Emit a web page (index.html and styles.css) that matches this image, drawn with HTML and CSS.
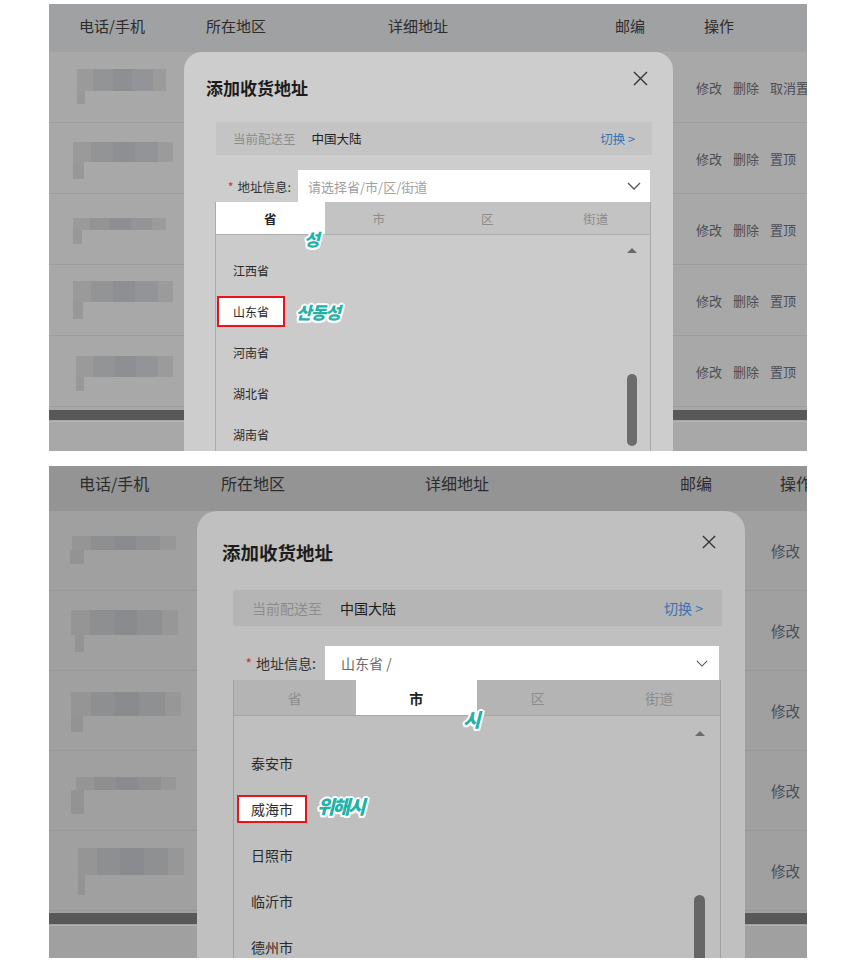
FILE: index.html
```html
<!DOCTYPE html>
<html lang="zh-CN">
<head>
<meta charset="utf-8">
<title>添加收货地址</title>
<link rel="stylesheet" href="styles.css">
</head>
<body>
<section class="panel p1">
  <div class="thead"><span>电话/手机</span><span>所在地区</span><span>详细地址</span><span>邮编</span><span>操作</span></div>
  <div class="row r1"><div class="blob"><i class="bar"></i><i class="stub"></i></div><div class="ops"><span>修改</span><span>删除</span><span>取消置顶</span></div></div>
  <div class="row r2"><div class="blob"><i class="bar"></i><i class="stub"></i></div><div class="ops"><span>修改</span><span>删除</span><span>置顶</span></div></div>
  <div class="row r3"><div class="blob"><i class="bar"></i><i class="stub"></i></div><div class="ops"><span>修改</span><span>删除</span><span>置顶</span></div></div>
  <div class="row r4"><div class="blob"><i class="bar"></i><i class="stub"></i></div><div class="ops"><span>修改</span><span>删除</span><span>置顶</span></div></div>
  <div class="row r5"><div class="blob"><i class="bar"></i><i class="stub"></i></div><div class="ops"><span>修改</span><span>删除</span><span>置顶</span></div></div>
  <div class="tfoot"><div class="dark"></div><div class="line"></div></div>

  <div class="modal">
    <div class="m-head">
      <h2 class="m-title">添加收货地址</h2>
      <svg class="m-close" viewBox="0 0 15 15"><path d="M1 1L14 14M14 1L1 14" stroke="#333" stroke-width="1.4" fill="none"/></svg>
    </div>
    <div class="m-body">
      <div class="ship"><span class="ship-label">当前配送至</span><span class="ship-val">中国大陆</span><span class="ship-switch">切换 &gt;</span></div>
      <div class="field">
        <label class="f-label"><em>*</em>地址信息:</label>
        <div class="f-input"><span>请选择省/市/区/街道</span><svg class="chev" viewBox="0 0 14 8"><path d="M1 1L7 7L13 1" stroke="#555" stroke-width="1.3" fill="none"/></svg></div>
      </div>
      <div class="picker">
        <div class="tabs"><span class="tab on">省</span><span class="tab">市</span><span class="tab">区</span><span class="tab">街道</span></div>
        <div class="list">
          <ul class="items">
            <li><span>江西省</span></li>
            <li class="sel"><span>山东省</span></li>
            <li><span>河南省</span></li>
            <li><span>湖北省</span></li>
            <li><span>湖南省</span></li>
          </ul>
          <div class="sbar"><i class="arrow"></i><i class="thumb"></i></div>
        </div>
      </div>
    </div>
    <span class="anno a-tab">성</span>
    <span class="anno a-item">산동성</span>
  </div>
</section>

<section class="panel p2">
  <div class="thead"><span>电话/手机</span><span>所在地区</span><span>详细地址</span><span>邮编</span><span>操作</span></div>
  <div class="row r1"><div class="blob"><i class="bar"></i><i class="stub"></i></div><div class="ops"><span>修改</span></div></div>
  <div class="row r2"><div class="blob"><i class="bar"></i><i class="stub"></i></div><div class="ops"><span>修改</span></div></div>
  <div class="row r3"><div class="blob"><i class="bar"></i><i class="stub"></i></div><div class="ops"><span>修改</span></div></div>
  <div class="row r4"><div class="blob"><i class="bar"></i><i class="stub"></i></div><div class="ops"><span>修改</span></div></div>
  <div class="row r5"><div class="blob"><i class="bar"></i><i class="stub"></i></div><div class="ops"><span>修改</span></div></div>
  <div class="tfoot"><div class="dark"></div><div class="line"></div></div>

  <div class="modal">
    <div class="m-head">
      <h2 class="m-title">添加收货地址</h2>
      <svg class="m-close" viewBox="0 0 15 15"><path d="M1 1L14 14M14 1L1 14" stroke="#333" stroke-width="1.4" fill="none"/></svg>
    </div>
    <div class="m-body">
      <div class="ship"><span class="ship-label">当前配送至</span><span class="ship-val">中国大陆</span><span class="ship-switch">切换 &gt;</span></div>
      <div class="field">
        <label class="f-label"><em>*</em>地址信息:</label>
        <div class="f-input"><span>山东省 /</span><svg class="chev" viewBox="0 0 14 8"><path d="M1 1L7 7L13 1" stroke="#555" stroke-width="1.3" fill="none"/></svg></div>
      </div>
      <div class="picker">
        <div class="tabs"><span class="tab">省</span><span class="tab on">市</span><span class="tab">区</span><span class="tab">街道</span></div>
        <div class="list">
          <ul class="items">
            <li><span>泰安市</span></li>
            <li class="sel"><span>威海市</span></li>
            <li><span>日照市</span></li>
            <li><span>临沂市</span></li>
            <li><span>德州市</span></li>
          </ul>
          <div class="sbar"><i class="arrow"></i><i class="thumb"></i></div>
        </div>
      </div>
    </div>
    <span class="anno a-tab">시</span>
    <span class="anno a-item">위해시</span>
  </div>
</section>
</body>
</html>
```

FILE: styles.css
```css
* { box-sizing: border-box; margin: 0; padding: 0; }
body { background: #fff; font-family: "Noto Sans CJK SC", "Noto Sans", sans-serif; color: #2b2b2b; }

.panel { position: relative; overflow: hidden; margin-left: 49px; width: 758px; background: #a8a8a8; }
.p1 { margin-top: 4px; height: 447px; }
.p2 { margin-top: 15px; height: 492px; background: #a0a0a0; }

.thead { display: grid; align-items: center; padding-left: 30px; color: #2c2c2c; white-space: nowrap; }
.p1 .thead { height: 48px; padding-bottom: 5px; background: #a0a1a2; font-size: 15px; grid-template-columns: 127px 182px 227px 89px 1fr; }
.p2 .thead { height: 45px; padding-bottom: 12px; background: #949494; font-size: 16px; grid-template-columns: 142px 204px 255px 100px 1fr; }

.row { display: flex; border-bottom: 1px solid #9d9d9d; }
.p1 .row { height: 71px; }
.p2 .row { height: 80px; border-bottom-color: #979797; }

.blob { flex: 0 0 647px; }
.p2 .blob { flex-basis: 722px; }
.blob i { display: block; }
.bar { background: linear-gradient(90deg, #9a9a9b 0 18%, #939496 18% 40%, #8e8f93 40% 62%, #939497 62% 85%, #9b9b9c 85%); filter: blur(0.6px); }
.stub { background: #98989a; filter: blur(0.6px); }
.p2 .bar { background: linear-gradient(90deg, #959596 0 18%, #8e8f91 18% 40%, #8a8b8e 40% 62%, #8f9092 62% 85%, #979798 85%); }
.p2 .stub { background: #939394; }

.p1 .r1 .bar { margin: 17px 0 0 28px; width: 89px; height: 22px; }
.p1 .r1 .stub { margin-left: 28px; width: 8px; height: 13px; }
.p1 .r2 .bar { margin: 19px 0 0 24px; width: 100px; height: 20px; }
.p1 .r2 .stub { margin-left: 24px; width: 11px; height: 17px; }
.p1 .r3 .bar { margin: 24px 0 0 24px; width: 93px; height: 12px; }
.p1 .r3 .stub { margin-left: 24px; width: 9px; height: 14px; }
.p1 .r4 .bar { margin: 16px 0 0 24px; width: 100px; height: 21px; }
.p1 .r4 .stub { margin-left: 24px; width: 10px; height: 17px; }
.p1 .r5 .bar { margin: 20px 0 0 27px; width: 97px; height: 21px; }
.p1 .r5 .stub { margin-left: 27px; width: 8px; height: 14px; }

.p2 .r1 .bar { margin: 25px 0 0 23px; width: 104px; height: 14px; }
.p2 .r1 .stub { margin-left: 21px; width: 14px; height: 14px; }
.p2 .r2 .bar { margin: 19px 0 0 22px; width: 107px; height: 25px; }
.p2 .r2 .stub { margin-left: 26px; width: 9px; height: 17px; }
.p2 .r3 .bar { margin: 21px 0 0 22px; width: 110px; height: 24px; }
.p2 .r3 .stub { margin-left: 22px; width: 12px; height: 16px; }
.p2 .r4 .bar { margin: 26px 0 0 27px; width: 100px; height: 13px; }
.p2 .r4 .stub { margin-left: 22px; width: 13px; height: 24px; }
.p2 .r5 .bar { margin: 17px 0 0 29px; width: 106px; height: 27px; }
.p2 .r5 .stub { margin-left: 29px; width: 7px; height: 20px; }

.ops { display: flex; align-items: center; white-space: nowrap; color: #4a4e56; }
.p1 .ops { font-size: 13px; gap: 11px; }
.p2 .ops { font-size: 14.5px; gap: 12px; }

.tfoot .dark { background: #585858; }
.tfoot .line { height: 1px; margin-top: 1px; background: #b2b2b2; }
.p1 .tfoot { padding-top: 3px; }
.p1 .tfoot .dark { height: 10px; }
.p2 .tfoot { padding-top: 2px; }
.p2 .tfoot .dark { height: 11px; }

/* modal */
.modal { position: absolute; background: #cdcdcd; }
.p1 .modal { left: 135px; top: 48px; width: 489px; height: 420px; border-radius: 18px 18px 0 0; }
.p2 .modal { left: 148px; top: 45px; width: 548px; height: 460px; border-radius: 20px 20px 0 0; background: #c0c0c0; }

.m-head { display: flex; justify-content: space-between; align-items: flex-start; }
.m-title { font-weight: 700; color: #1c1c1c; white-space: nowrap; }
.p1 .m-head { height: 70px; padding: 0 25px 0 22px; }
.p1 .m-title { font-size: 17px; line-height: 24px; margin-top: 24px; }
.p1 .m-close { width: 15px; height: 15px; margin-top: 19px; }
.p2 .m-head { height: 79px; padding: 0 29px 0 25px; }
.p2 .m-title { font-size: 18.5px; line-height: 26px; margin-top: 28px; }
.p2 .m-close { width: 14px; height: 14px; margin-top: 24px; }

.p1 .m-body { padding: 0 21px 0 32px; }
.p2 .m-body { padding: 0 23px 0 36px; }

.ship { display: flex; align-items: center; white-space: nowrap; }
.p1 .ship { height: 33px; padding: 0 17px; font-size: 12.5px; background: #c4c4c4; }
.p2 .ship { height: 36px; padding: 0 19px; font-size: 14px; background: #b5b5b5; }
.ship-label { color: #8c8c8c; }
.ship-val { color: #202020; }
.p1 .ship-val { margin-left: 16px; }
.p2 .ship-val { margin-left: 18px; }
.ship-switch { margin-left: auto; color: #3a72b2; }

.field { display: flex; }
.p1 .field { margin-top: 15px; height: 32px; }
.p2 .field { margin-top: 20px; height: 34px; }
.f-label { display: flex; align-items: center; justify-content: flex-end; white-space: nowrap; color: #333; }
.p1 .f-label { width: 82px; padding-right: 7px; font-size: 12.5px; }
.p2 .f-label { width: 92px; padding-right: 9px; font-size: 14px; }
.f-label em { color: #c9372c; font-style: normal; margin-right: 4px; }
.f-input { flex: 1; background: #fff; display: flex; align-items: center; justify-content: space-between; white-space: nowrap; }
.p1 .f-input { padding: 0 9px 0 10px; margin-right: 2px; font-size: 13px; color: #a0a0a0; }
.p2 .f-input { padding: 0 11px 0 16px; margin-right: 3px; font-size: 14px; color: #6a6a6a; }
.p1 .chev { width: 14px; height: 8px; }
.p2 .chev { width: 12px; height: 7px; }

.picker { border-left: 1px solid #a9a9a9; border-right: 1px solid #a9a9a9; }
.p1 .picker { margin: 0 1px 0 -1px; }
.p2 .picker { margin-right: 1px; border-color: #a0a0a0; }

.tabs { display: grid; grid-template-columns: repeat(4, 1fr); border-bottom: 1px solid #adadad; }
.p1 .tabs { height: 33px; font-size: 12.5px; background: #c3c3c3; }
.p2 .tabs { height: 36px; font-size: 14px; background: #b4b4b4; border-bottom-color: #a5a5a5; }
.tab { display: flex; align-items: center; justify-content: center; color: #8c8c8c; }
.tab.on { background: #fff; color: #222; font-weight: 700; }

.list { display: flex; }
.p1 .list { height: 220px; background: #cbcbcb; }
.p2 .list { height: 260px; background: #bfbfbf; }
.items { list-style: none; flex: 1; color: #2a2a2a; }
.items li { display: flex; align-items: center; }
.items span { border: 2px solid transparent; white-space: nowrap; }
.items .sel span { border-color: #e8131b; background: #fff; }
.p1 .items { padding-top: 15px; font-size: 12px; }
.p1 .items li { height: 41px; }
.p1 .items span { height: 31px; line-height: 27px; padding: 0 14px; margin-left: 1px; }
.p2 .items { padding-top: 24px; font-size: 14px; }
.p2 .items li { height: 46px; }
.p2 .items span { height: 28px; line-height: 24px; padding: 0 12px; margin-left: 3px; }

.sbar { display: flex; flex-direction: column; align-items: center; }
.arrow { display: block; width: 0; height: 0; border-left: 5px solid transparent; border-right: 5px solid transparent; border-bottom: 5px solid #6a6a6a; }
.thumb { display: block; border-radius: 5px; background: #6c6c6c; }
.p1 .sbar { width: 10px; margin-right: 13px; padding-top: 13px; }
.p1 .thumb { width: 10px; margin-top: 121px; height: 72px; }
.p2 .sbar { width: 11px; margin-right: 15px; padding-top: 15px; }
.p2 .thumb { width: 11px; margin-top: 159px; height: 80px; border-radius: 6px; background: #666; }

/* korean annotations */
.anno { position: absolute; font-family: "Noto Sans CJK KR", "Noto Sans CJK SC", sans-serif; font-weight: 900; font-style: italic; color: #22b2a6; line-height: 1; white-space: nowrap;
  text-shadow: 2px 0 0 #fff, -2px 0 0 #fff, 0 2px 0 #fff, 0 -2px 0 #fff, 1.5px 1.5px 0 #fff, -1.5px 1.5px 0 #fff, 1.5px -1.5px 0 #fff, -1.5px -1.5px 0 #fff; }
.p1 .a-tab { left: 120px; top: 178px; font-size: 17px; }
.p1 .a-item { left: 112px; top: 251px; font-size: 17px; letter-spacing: -1px; }
.p2 .a-tab { left: 266px; top: 198px; font-size: 19px; }
.p2 .a-item { left: 120px; top: 285px; font-size: 19px; letter-spacing: -2px; }
```
